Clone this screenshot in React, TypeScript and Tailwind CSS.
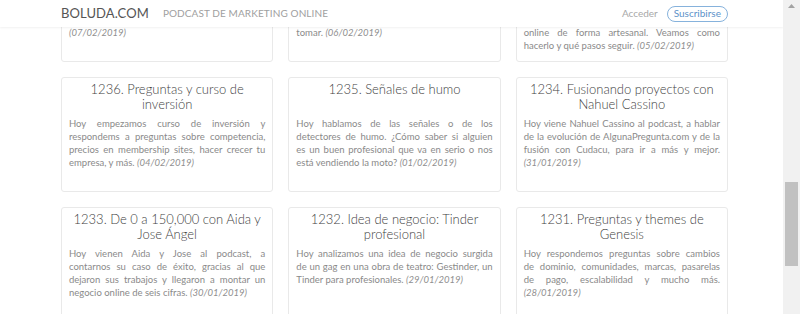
import React from "react";

type Card = {
  title: string[];
  lines: string[];
  date: string;
  hidden?: boolean;
};

const topRow: Card[] = [
  { title: [], lines: ["", "", "", ""], date: "(07/02/2019)", hidden: true },
  { title: [], lines: ["", "", "", "tomar."], date: "(06/02/2019)", hidden: true },
  {
    title: [],
    lines: ["", "", "", "online de forma artesanal. Veamos como", "hacerlo y qué pasos seguir."],
    date: "(05/02/2019)",
    hidden: true,
  },
];

const cards: Card[] = [
  {
    title: ["1236. Preguntas y curso de", "inversión"],
    lines: [
      "Hoy empezamos curso de inversión y",
      "respondems a preguntas sobre competencia,",
      "precios en membership sites, hacer crecer tu",
      "empresa, y más.",
    ],
    date: "(04/02/2019)",
  },
  {
    title: ["1235. Señales de humo"],
    lines: [
      "Hoy hablamos de las señales o de los",
      "detectores de humo. ¿Cómo saber si alguien",
      "es un buen profesional que va en serio o nos",
      "está vendiendo la moto?",
    ],
    date: "(01/02/2019)",
  },
  {
    title: ["1234. Fusionando proyectos con", "Nahuel Cassino"],
    lines: [
      "Hoy viene Nahuel Cassino al podcast, a hablar",
      "de la evolución de AlgunaPregunta.com y de la",
      "fusión con Cudacu, para ir a más y mejor.",
      "",
    ],
    date: "(31/01/2019)",
  },
  {
    title: ["1233. De 0 a 150,000 con Aida y", "Jose Ángel"],
    lines: [
      "Hoy vienen Aida y Jose al podcast, a",
      "contarnos su caso de éxito, gracias al que",
      "dejaron sus trabajos y llegaron a montar un",
      "negocio online de seis cifras.",
    ],
    date: "(30/01/2019)",
  },
  {
    title: ["1232. Idea de negocio: Tinder", "profesional"],
    lines: [
      "Hoy analizamos una idea de negocio surgida",
      "de un gag en una obra de teatro: Gestinder, un",
      "Tinder para profesionales.",
    ],
    date: "(29/01/2019)",
  },
  {
    title: ["1231. Preguntas y themes de", "Genesis"],
    lines: [
      "Hoy respondemos preguntas sobre cambios",
      "de dominio, comunidades, marcas, pasarelas",
      "de pago, escalabilidad y mucho más.",
      "",
    ],
    date: "(28/01/2019)",
  },
];

function EpisodeCard({ card }: { card: Card }) {
  const last = card.lines.length - 1;

  return (
    <article className="h-[115px] rounded-[3px] border border-[#e9e9e9] bg-white px-[7px] pt-[4px]">
      <h2 className="h-[30px] text-center text-[13px] font-light leading-[15px] text-[#3f3f3f]">
        {card.title.map((t) => (
          <div key={t}>{t}</div>
        ))}
      </h2>

      <div className="mt-[5px] text-[9.5px] leading-[13px] text-[#8a8a8a]">
        {card.lines.map((line, i) =>
          i < last ? (
            <div
              key={i}
              className="h-[13px] text-justify [text-align-last:justify]"
            >
              {line}
            </div>
          ) : (
            <div key={i} className="h-[13px]">
              {line}
              {line ? " " : ""}
              <span className="italic text-[#909090]">{card.date}</span>
            </div>
          ),
        )}
      </div>
    </article>
  );
}

export default function App() {
  return (
    <div className="flex h-[314px] w-[800px] overflow-hidden bg-white font-['Lato',sans-serif]">
      <div className="relative h-full flex-1 overflow-hidden">
        <header className="absolute inset-x-0 top-0 z-10 flex h-[27px] items-center bg-white pl-[61px] pr-[55px] shadow-[0_1px_2px_rgba(0,0,0,0.06)]">
          <span className="text-[13px] tracking-[0.1px] text-[#555]">
            BOLUDA.COM
          </span>
          <span className="ml-[14px] text-[10px] tracking-[0.1px] text-[#a0a0a0]">
            PODCAST DE MARKETING ONLINE
          </span>
          <span className="ml-auto text-[10px] text-[#a8a8a8]">Acceder</span>
          <button
            type="button"
            className="ml-[9px] flex h-[16px] items-center rounded-full border border-[#86b2dc] px-[6px] text-[10px] text-[#5d92c9]"
          >
            Suscribirse
          </button>
        </header>

        <main className="-mt-[53px] ml-[61px] w-[667px]">
          <div className="grid grid-cols-3 gap-[15px]">
            {topRow.map((card, i) => (
              <EpisodeCard key={`top-${i}`} card={card} />
            ))}
            {cards.map((card) => (
              <EpisodeCard key={card.title[0]} card={card} />
            ))}
          </div>
        </main>
      </div>

      <div className="flex h-full w-[17px] flex-col items-center bg-[#f1f1f1]">
        <svg width="7" height="4" viewBox="0 0 7 4" className="mt-[4px]">
          <path d="M0 4 L3.5 0 L7 4 Z" fill="#a3a3a3" />
        </svg>
        <div className="mt-[174px] h-[84px] w-[13px] bg-[#c1c1c1]" />
      </div>
    </div>
  );
}
